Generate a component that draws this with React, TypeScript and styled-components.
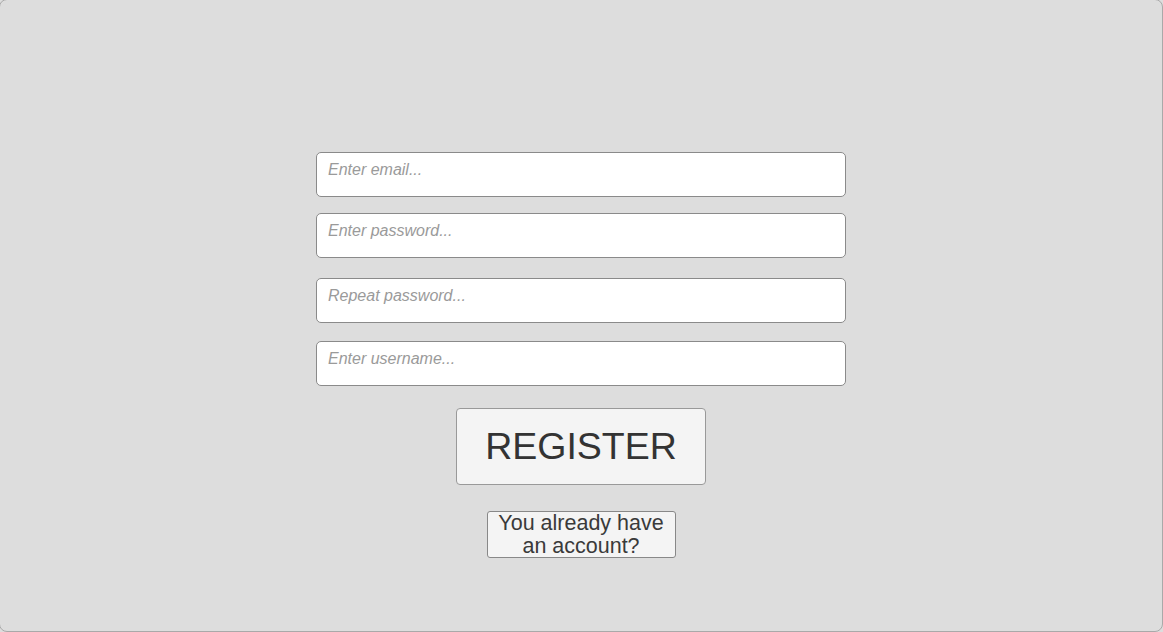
import React from "react"
import styled, { createGlobalStyle } from "styled-components"

const GlobalStyle = createGlobalStyle`
  html, body {
    margin: 0;
    padding: 0;
    background: #dddddd;
    overflow: hidden;
  }
  body {
    font-family: "Liberation Sans", Arial, sans-serif;
  }
`

const Screen = styled.div`
  box-sizing: border-box;
  width: 1164px;
  height: 633px;
  margin: -1px 0 0 -1px;
  background: #dddddd;
  border: 1px solid #a9a9a9;
  border-radius: 8px;
  display: flex;
  flex-direction: column;
  align-items: center;
  padding-top: 152px;
`

const Form = styled.form`
  display: flex;
  flex-direction: column;
  align-items: center;
`

const Field = styled.input<{ $gap: number }>`
  box-sizing: border-box;
  width: 530px;
  height: 45px;
  margin-top: ${(p) => p.$gap}px;
  padding: 0 11px 10px;
  background: #ffffff;
  border: 1px solid #8a8a8a;
  border-radius: 5px;
  font-family: "Liberation Sans", Arial, sans-serif;
  font-size: 16px;
  color: #333;
  outline: none;

  &::placeholder {
    color: #9a9a9a;
    font-style: italic;
  }
`

const RegisterButton = styled.button`
  box-sizing: border-box;
  width: 250px;
  height: 77px;
  margin-top: 22px;
  background: #f4f4f4;
  border: 1px solid #999;
  border-radius: 4px;
  font-family: "Liberation Sans", Arial, sans-serif;
  font-size: 37.5px;
  color: #333;
  padding: 0;
`

const LinkButton = styled.button`
  box-sizing: border-box;
  width: 189px;
  height: 47px;
  margin-top: 26px;
  padding: 0;
  background: #f4f4f4;
  border: 1px solid #888;
  border-radius: 3px;
  font-family: "Liberation Sans", Arial, sans-serif;
  font-size: 21.5px;
  line-height: 23px;
  color: #3a3a3a;
`

export default function App() {
  return (
    <>
      <GlobalStyle />
      <Screen>
        <Form onSubmit={(e) => e.preventDefault()}>
          <Field $gap={0} type="email" placeholder="Enter email..." />
          <Field $gap={16} type="password" placeholder="Enter password..." />
          <Field $gap={20} type="password" placeholder="Repeat password..." />
          <Field $gap={18} type="text" placeholder="Enter username..." />
          <RegisterButton type="submit">REGISTER</RegisterButton>
          <LinkButton type="button">
            You already have
            <br />
            an account?
          </LinkButton>
        </Form>
      </Screen>
    </>
  )
}
